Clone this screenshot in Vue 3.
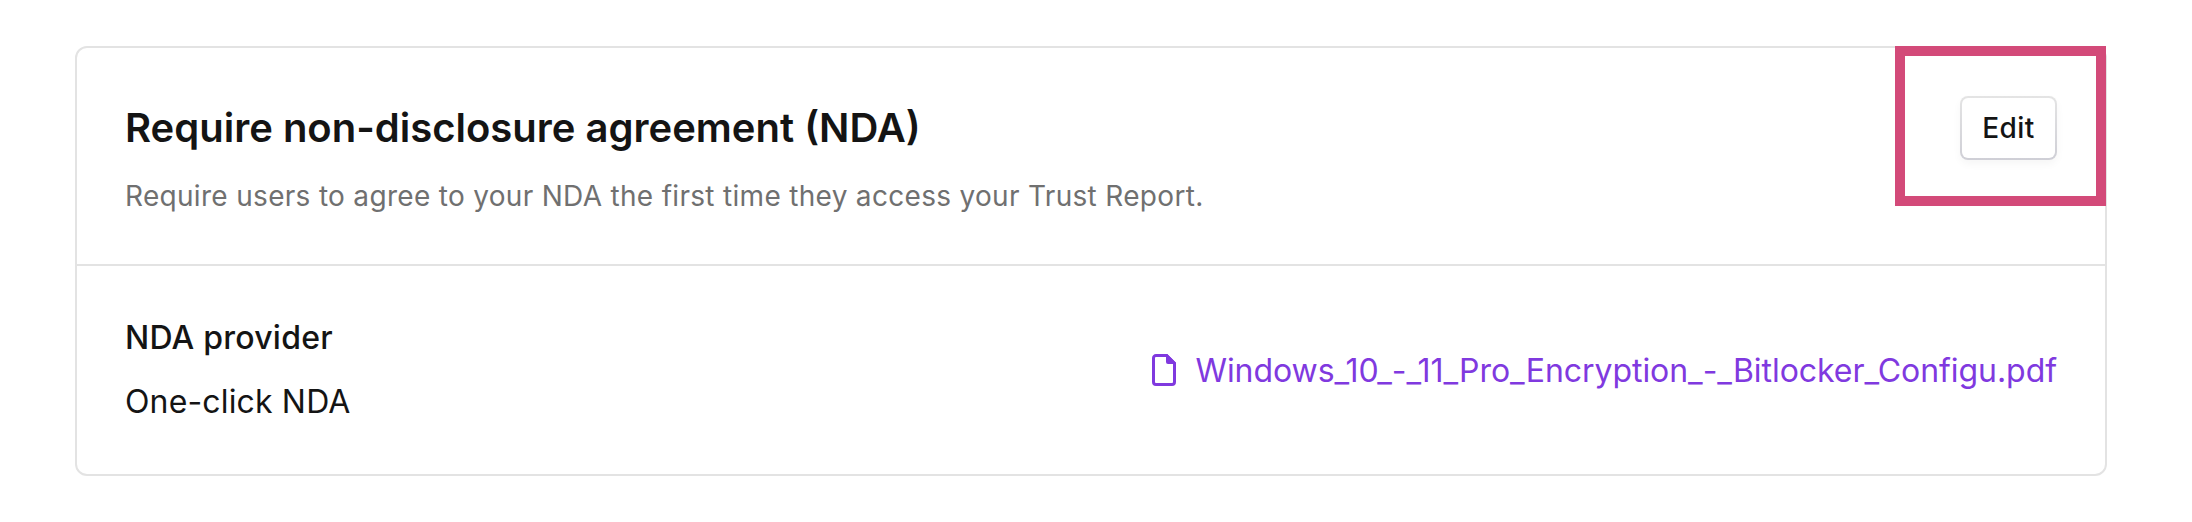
<script setup>
const title = 'Require non-disclosure agreement (NDA)'
const description = 'Require users to agree to your NDA the first time they access your Trust Report.'
const fileName = 'Windows_10_-_11_Pro_Encryption_-_Bitlocker_Configu.pdf'
</script>

<template>
  <main class="page">
    <section class="card">
      <header class="card-header">
        <div class="heading">
          <h2 class="title"><span class="title-text">{{ title }}</span></h2>
          <p class="description"><span class="description-text">{{ description }}</span></p>
        </div>
        <button class="edit" type="button"><span class="edit-text">Edit</span></button>
      </header>
      <div class="card-body">
        <dl class="provider">
          <dt><span class="provider-label">NDA provider</span></dt>
          <dd><span class="provider-value">One-click NDA</span></dd>
        </dl>
        <a class="file">
          <svg class="file-icon" width="24" height="32" viewBox="0 0 24 32" aria-hidden="true">
            <path d="M4 1.5H14.6L22.5 9.4V28A2.5 2.5 0 0 1 20 30.5H4A2.5 2.5 0 0 1 1.5 28V4A2.5 2.5 0 0 1 4 1.5Z" fill="none" stroke="currentColor" stroke-width="3" />
            <path d="M14 0H15.2L24 8.8V10H16A2 2 0 0 1 14 8Z" fill="currentColor" />
          </svg>
          <span class="file-name">{{ fileName }}</span>
        </a>
      </div>
      <div class="highlight"></div>
    </section>
  </main>
</template>

<style>
body {
  background: #fff;
}
</style>

<style scoped>
.page {
  box-sizing: border-box;
  width: 2192px;
  height: 522px;
  padding: 46px 85px 46px 75px;
  background: #fff;
  font-family: Inter, "Liberation Sans", sans-serif;
  color: #141414;
}
.card {
  position: relative;
  box-sizing: border-box;
  height: 430px;
  border: 2px solid #e3e3e3;
  border-radius: 12px;
}
.card-header {
  display: flex;
  justify-content: space-between;
  align-items: flex-start;
  padding: 48px;
  border-bottom: 2px solid #e3e3e3;
}
.title {
  margin: 0 0 16px;
  font-size: 40px;
  font-weight: 620;
  line-height: 64px;
}
.description {
  margin: 0;
  font-size: 28px;
  line-height: 40px;
  letter-spacing: 0.31px;
  color: #707070;
}
.edit {
  box-sizing: border-box;
  width: 97px;
  height: 64px;
  padding: 0;
  border: 2px solid transparent;
  border-radius: 8px;
  background: linear-gradient(#fff, #fff) padding-box, linear-gradient(#e4e4e4, #cfcfd6) border-box;
  box-shadow: 0 4px 8px rgba(0, 0, 0, 0.04);
  font-family: inherit;
  font-size: 28px;
  font-weight: 540;
  line-height: 56px;
  letter-spacing: 0.4px;
  color: #141414;
}
.card-body {
  display: flex;
  justify-content: space-between;
  align-items: center;
  padding: 48px;
  font-size: 32px;
  line-height: 48px;
}
.provider {
  display: flex;
  flex-direction: column;
  gap: 16px;
  margin: 0;
}
.provider dt {
  font-weight: 530;
  letter-spacing: 0.23px;
}
.provider dd {
  margin: 0;
  letter-spacing: 0.15px;
}
.file {
  display: flex;
  align-items: center;
  gap: 19px;
  letter-spacing: -0.05px;
  color: #8039df;
}
.file-name {
  padding-top: 2px;
}
.highlight {
  position: absolute;
  top: -2px;
  right: -1px;
  box-sizing: border-box;
  width: 211px;
  height: 160px;
  border: 10px solid #d34a79;
}
</style>
